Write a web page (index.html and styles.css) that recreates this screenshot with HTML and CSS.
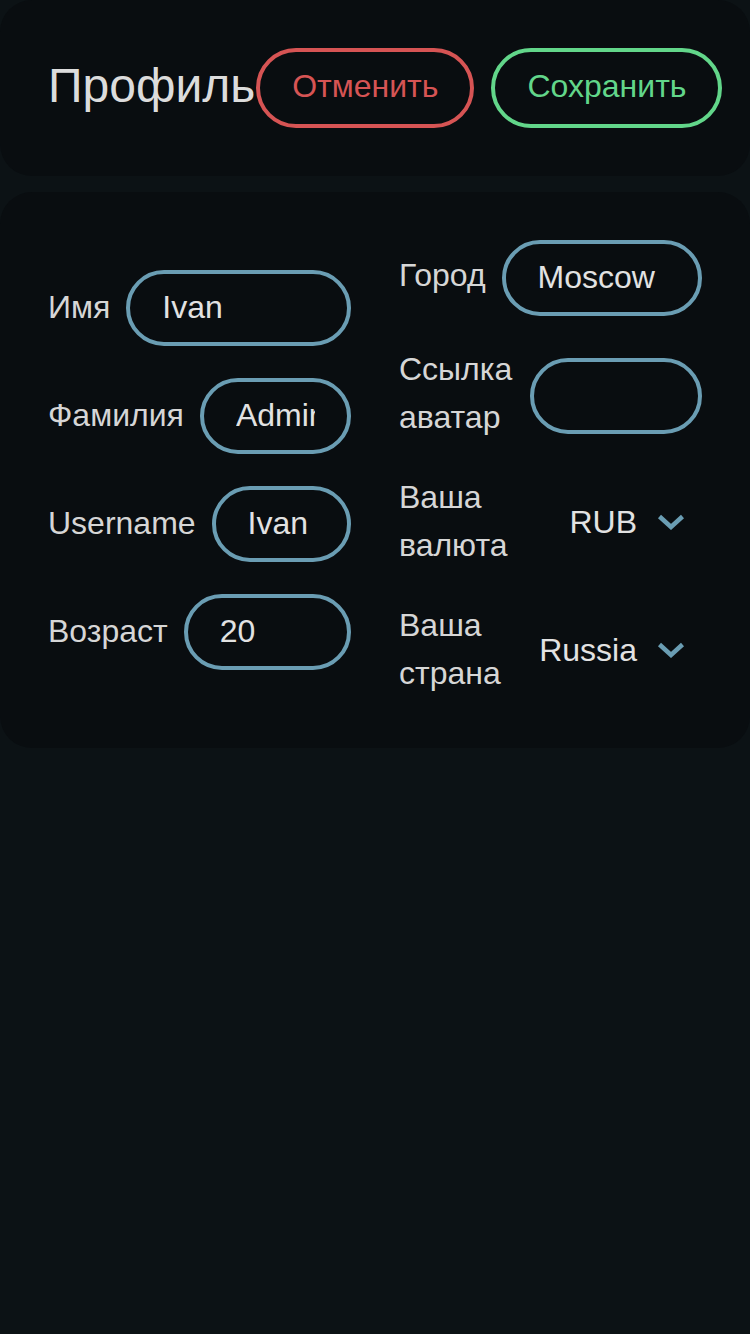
FILE: index.html
```html
<!DOCTYPE html>
<html lang="ru">
<head>
<meta charset="utf-8">
<title>Профиль</title>
<link rel="stylesheet" href="styles.css">
</head>
<body>
<div class="page">
  <header class="card header">
    <h1 class="title">Профиль</h1>
    <div class="actions">
      <button class="btn btn-cancel">Отменить</button>
      <button class="btn btn-save">Сохранить</button>
    </div>
  </header>
  <section class="card form">
    <div class="col col-left">
      <label class="row">
        <span class="label">Имя</span>
        <input class="field" value="Ivan">
      </label>
      <label class="row">
        <span class="label">Фамилия</span>
        <input class="field" value="Admin">
      </label>
      <label class="row">
        <span class="label">Username</span>
        <input class="field" value="Ivan">
      </label>
      <label class="row">
        <span class="label">Возраст</span>
        <input class="field" value="20">
      </label>
    </div>
    <div class="col col-right">
      <label class="row">
        <span class="label">Город</span>
        <input class="field" value="Moscow">
      </label>
      <label class="row">
        <span class="label">Ссылка аватар</span>
        <input class="field" value="">
      </label>
      <div class="row">
        <span class="label">Ваша валюта</span>
        <div class="select">
          <span class="select-value">RUB</span>
          <svg class="chevron" width="28" height="16" viewBox="0 0 28 16"><path d="M2.5 2.5 L14 13 L25.5 2.5" fill="none" stroke="#6a9db3" stroke-width="4.5"/></svg>
        </div>
      </div>
      <div class="row">
        <span class="label">Ваша страна</span>
        <div class="select">
          <span class="select-value">Russia</span>
          <svg class="chevron" width="28" height="16" viewBox="0 0 28 16"><path d="M2.5 2.5 L14 13 L25.5 2.5" fill="none" stroke="#6a9db3" stroke-width="4.5"/></svg>
        </div>
      </div>
    </div>
  </section>
</div>
</body>
</html>
```
FILE: styles.css
```css
* { box-sizing: border-box; }
html, body {
  margin: 0;
  padding: 0;
  background: #0c1215;
  font-family: "Liberation Sans", Arial, sans-serif;
  color: #dcdcdc;
}
body { min-height: 1334px; }
.page {
  display: flex;
  flex-direction: column;
  gap: 16px;
}
.card {
  background: #090d10;
  border-radius: 32px;
  padding: 48px;
}
.header {
  display: flex;
  align-items: center;
}
.title {
  margin: 0 1px 4px 0;
  font-size: 48px;
  font-weight: 400;
  line-height: 1.2;
  color: #dcdcdc;
  flex-shrink: 0;
}
.actions {
  display: flex;
  gap: 17px;
  flex-shrink: 0;
}
.btn {
  height: 80px;
  padding: 0 32px 4px;
  border-radius: 40px;
  background: transparent;
  border: 4px solid;
  font-family: inherit;
  font-size: 32px;
  line-height: 1;
}
.btn-cancel { border-color: #d65454; color: #d65454; }
.btn-save { border-color: #62d68a; color: #62d68a; }

.form {
  display: grid;
  grid-template-columns: 1fr 1fr;
  column-gap: 48px;
  align-items: center;
}
.col {
  display: flex;
  flex-direction: column;
  gap: 32px;
}
.row {
  display: flex;
  align-items: center;
  gap: 16px;
}
.label {
  font-size: 32px;
  line-height: 48px;
  color: #d6d6d6;
}
.col-left .label {
  white-space: nowrap;
  flex-shrink: 0;
  margin-top: -1px;
  padding-bottom: 1px;
}
.col-left .field { flex: 1 1 0; min-width: 0; }
.col-right .label {
  flex: 0 1 auto;
  min-width: 0;
  margin-top: -3px;
  padding-bottom: 3px;
}
.col-right .field, .col-right .select { flex: 1 0 172px; min-width: 0; }
.field {
  height: 76px;
  border: 4px solid #6a9db3;
  border-radius: 38px;
  background: transparent;
  color: #e2e2e2;
  font-family: inherit;
  font-size: 32px;
  padding: 0 32px 2px;
  outline: none;
  width: 100%;
}
.select {
  display: flex;
  align-items: center;
  justify-content: flex-end;
  gap: 20px;
  padding-right: 17px;
  padding-bottom: 4px;
  height: 76px;
}
.select-value {
  font-size: 32px;
  color: #e2e2e2;
}
.chevron { display: block; }
```
